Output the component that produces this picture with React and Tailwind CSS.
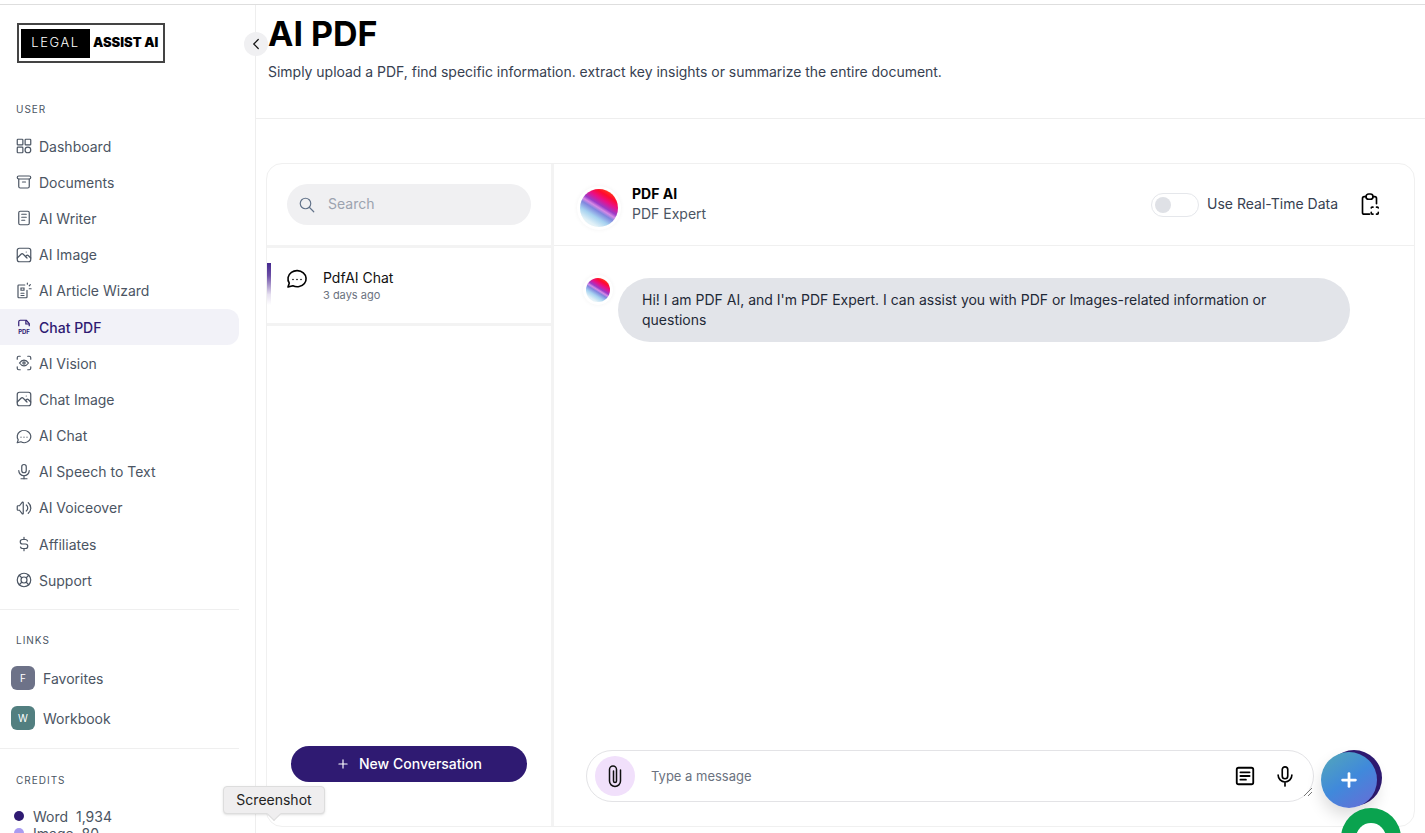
import React from 'react'
import {
  TbArchive,
  TbChevronLeft,
  TbCurrencyDollar,
  TbLifebuoy,
  TbMicrophone,
  TbNotes,
  TbPhoto,
  TbPlus,
  TbSearch,
  TbVolume,
} from 'react-icons/tb'

const DashIcon = ({ className }) => (
  <svg viewBox="0 0 24 24" fill="none" stroke="currentColor" strokeWidth="1.6" className={className}>
    <rect x="3" y="3" width="7.5" height="7.5" rx="1" />
    <rect x="13.5" y="3" width="7.5" height="7.5" rx="1" />
    <rect x="3" y="13.5" width="7.5" height="7.5" rx="1" />
    <circle cx="17.2" cy="17.2" r="3.8" />
  </svg>
)

const WizardIcon = ({ className }) => (
  <svg viewBox="0 0 24 24" fill="none" stroke="currentColor" strokeWidth="1.6" strokeLinecap="round" className={className}>
    <path d="M16 11v9a1 1 0 0 1-1 1H5a1 1 0 0 1-1-1V5a1 1 0 0 1 1-1h8" />
    <path d="M8 8h4v3H8z" />
    <path d="M8 15h4M8 18h4M19 5l1.5-1.5M19 9h2.5M16.5 3V1.5" />
  </svg>
)

const PdfIcon = ({ className }) => (
  <svg viewBox="0 0 24 24" fill="none" className={className}>
    <path d="M5 11V5a2 2 0 0 1 2-2h8l4 4.5V11" stroke="currentColor" strokeWidth="1.6" strokeLinejoin="round" />
    <path d="M14.5 3v5H19" stroke="currentColor" strokeWidth="1.6" />
    <text x="12" y="21" textAnchor="middle" fontSize="8" fontWeight="700" fill="currentColor" fontFamily="Inter, sans-serif">PDF</text>
  </svg>
)

const VisionIcon = ({ className }) => (
  <svg viewBox="0 0 24 24" fill="none" stroke="currentColor" strokeWidth="1.6" strokeLinecap="round" className={className}>
    <path d="M3 7V5a2 2 0 0 1 2-2h2M17 3h2a2 2 0 0 1 2 2v2M21 17v2a2 2 0 0 1-2 2h-2M7 21H5a2 2 0 0 1-2-2v-2" />
    <path d="M6 12c3.5-5 8.500-5 12 0-3.500 5-8.500 5-12 0z" />
    <circle cx="12" cy="12" r="1.500" />
  </svg>
)

const ChatDotsIcon = ({ className }) => (
  <svg viewBox="0 0 24 24" fill="none" stroke="currentColor" strokeWidth="1.6" strokeLinecap="round" strokeLinejoin="round" className={className}>
    <path d="M3 21l1.300-3.900C1.900 13.600 2.800 9 6.400 6.400c3.500-2.500 8.600-2.300 11.900.5 3.300 2.800 3.700 7.400 1.100 10.600-2.600 3.200-7.500 4.200-11.500 2.200L3 21z" />
    <path d="M8 13.500h.01M12 13.500h.01M16 13.500h.01" />
  </svg>
)

const ClipboardIcon = ({ className }) => (
  <svg viewBox="0 0 24 28" fill="none" stroke="currentColor" strokeWidth="1.900" strokeLinecap="round" className={className}>
    <path d="M8 5H6a2 2 0 0 0-2 2v16a2 2 0 0 0 2 2h6" />
    <path d="M16 5h2a2 2 0 0 1 2 2v6" />
    <rect x="8" y="2" width="8" height="6" rx="3" />
    <path d="M16 17h-1a1 1 0 0 0-1 1M20 17h1a1 1 0 0 1 1 1M14 23v1a1 1 0 0 0 1 1h1M22 23v1a1 1 0 0 1-1 1h-1" />
  </svg>
)

const ClipIcon = ({ className }) => (
  <svg viewBox="0 0 24 24" fill="none" stroke="currentColor" strokeWidth="1.500" strokeLinecap="round" className={className}>
    <path d="M10.500 7v10a1.500 1.500 0 0 0 3 0V5.500a3.500 3.500 0 0 0-7 0V17a5.500 5.500 0 0 0 11 0V6" />
  </svg>
)

const NoteBoxIcon = ({ className }) => (
  <svg viewBox="0 0 24 24" fill="none" stroke="currentColor" strokeWidth="2" strokeLinecap="round" className={className}>
    <rect x="3" y="3" width="18" height="18" rx="2" />
    <path d="M7 8h10M7 12h10M7 16h6" />
  </svg>
)

const MicIcon = ({ className }) => (
  <svg viewBox="0 0 24 24" fill="none" stroke="currentColor" strokeWidth="1.800" strokeLinecap="round" className={className}>
    <rect x="9" y="2" width="6" height="13" rx="3" />
    <path d="M4.500 11a7.500 7.500 0 0 0 15 0M12 18.500V23" />
  </svg>
)

const userLinks = [
  { label: 'Dashboard', icon: DashIcon },
  { label: 'Documents', icon: TbArchive },
  { label: 'AI Writer', icon: TbNotes },
  { label: 'AI Image', icon: TbPhoto },
  { label: 'AI Article Wizard', icon: WizardIcon },
  { label: 'Chat PDF', icon: PdfIcon, active: true },
  { label: 'AI Vision', icon: VisionIcon },
  { label: 'Chat Image', icon: TbPhoto },
  { label: 'AI Chat', icon: ChatDotsIcon },
  { label: 'AI Speech to Text', icon: TbMicrophone },
  { label: 'AI Voiceover', icon: TbVolume },
  { label: 'Affiliates', icon: TbCurrencyDollar },
  { label: 'Support', icon: TbLifebuoy },
]

const Avatar = ({ size }) => (
  <div className={`${size} rounded-full shrink-0 bg-[linear-gradient(212deg,#ff7a00_0%,#ff0a30_22%,#e8108a_33%,#9a3cc8_44%,#d68ae6_50%,#7f86de_56%,#a6d2f0_68%,#e2f1f7_82%,#f0f7f9_100%)] shadow-[0_0_0_3px_#fff,0_0_4px_3px_#f3f3f3]`}></div>
)

const Sidebar = () => {
  return (
    <aside className="w-[256px] shrink-0 border-r border-[#eeeeee] flex flex-col">
      <div className="pl-[17px] pt-[18px]">
        <div className="w-[148px] h-[40px] border-2 border-[#444444] flex items-center pl-[2px]">
          <div className="w-[69px] h-[29px] bg-black text-white text-[13px] tracking-[1.6px] font-light flex items-center justify-center">LEGAL</div>
          <div className="ml-[3px] text-[13px] font-black text-black whitespace-nowrap">ASSIST AI</div>
        </div>
      </div>

      <div className="mt-[40px] pl-4 text-[10px] leading-3 tracking-[1px] text-[#4b5563]">USER</div>
      <nav className="mt-[13px] w-[239px] flex flex-col">
        {userLinks.map((item) => (
          <div
            key={item.label}
            className={`h-[36.2px] flex items-center gap-[6px] pl-[15px] rounded-r-xl text-[14px] ${item.active ? 'bg-[#f2f2f8] text-[#2f1a72] font-medium' : 'text-[#4b5563]'}`}
          >
            <item.icon className="w-[18px] h-[18px] shrink-0" strokeWidth={1.6} />
            <span>{item.label}</span>
          </div>
        ))}
      </nav>
      <div className="mt-[11px] w-[239px] border-t border-[#efefef]"></div>

      <div className="mt-[24px] pl-4 text-[10px] leading-3 tracking-[1px] text-[#4b5563]">LINKS</div>
      <div className="mt-[20px] pl-[11px] flex flex-col gap-[16px]">
        <div className="flex items-center gap-[8px] text-[14px] text-[#4b5563]">
          <span className="w-6 h-6 rounded-md bg-[#6d7288] text-white text-[10px] flex items-center justify-center">F</span>
          Favorites
        </div>
        <div className="flex items-center gap-[8px] text-[14px] text-[#4b5563]">
          <span className="w-6 h-6 rounded-md bg-[#527f80] text-white text-[10px] flex items-center justify-center">W</span>
          Workbook
        </div>
      </div>
      <div className="mt-[18px] w-[239px] border-t border-[#efefef]"></div>

      <div className="mt-[25px] pl-4 text-[10px] leading-3 tracking-[1px] text-[#4b5563]">CREDITS</div>
      <div className="mt-[22px] pl-[14px] flex flex-col gap-[1px] text-[14px] text-[#4b5563]">
        <div className="flex items-center gap-[9px] h-[16px]">
          <span className="w-[10px] h-[10px] rounded-full bg-[#2f1a72]"></span>
          <span>Word&nbsp; 1,934</span>
        </div>
        <div className="flex items-center gap-[9px] h-[16px]">
          <span className="w-[10px] h-[10px] rounded-full bg-[#a99bf0]"></span>
          <span>Image&nbsp; 80</span>
        </div>
      </div>
    </aside>
  )
}

const ChatList = () => {
  return (
    <div className="w-[284px] shrink-0 border-r-[3px] border-[#f3f3f3] box-content flex flex-col">
      <div className="h-[61px] shrink-0 pl-5 pt-5 pr-5 border-b-[3px] border-[#f3f3f3] box-content">
        <div className="h-[41px] w-[244px] bg-[#f0f0f2] rounded-full flex items-center pl-[11px] gap-[12px]">
          <TbSearch className="w-[18px] h-[18px] text-[#64748b]" strokeWidth={1.6} />
          <span className="text-[14px] text-[#9ca3af] mb-[2px]">Search</span>
        </div>
      </div>
      <div className="h-[75px] shrink-0 border-b-[3px] border-[#f3f3f3] box-content flex">
        <div className="w-[4px] h-[42px] mt-[15px] bg-[linear-gradient(180deg,#44288e_0%,#6c4ea6_30%,#e6e0f0_75%,#ffffff_100%)]"></div>
        <ChatDotsIcon className="w-6 h-6 ml-[14px] mt-[18px] text-black" />
        <div className="ml-[14px] mt-[20px]">
          <div className="text-[14px] leading-5 text-[#111111]">PdfAI Chat</div>
          <div className="text-[11px] leading-[14px] text-[#6b7280]">3 days ago</div>
        </div>
      </div>
      <div className="flex-1 flex flex-col justify-end items-center pb-[44px]">
        <button className="w-[236px] h-[36px] pb-[1px] bg-[#2f1a72] rounded-full text-white text-[14px] font-medium flex items-center justify-center gap-[9px]">
          <TbPlus className="w-[14px] h-[14px]" />
          New Conversation
        </button>
      </div>
    </div>
  )
}

const ChatPanel = () => {
  return (
    <div className="flex-1 flex flex-col min-w-0">
      <div className="h-[82px] shrink-0 border-b border-[#f0f0f0] flex items-center pl-[26px] pr-[34px]">
        <div className="mt-[6px]"><Avatar size="w-[38px] h-[38px]" /></div>
        <div className="ml-[14px] mb-[1px]">
          <div className="text-[14px] leading-5 font-bold text-black">PDF AI</div>
          <div className="text-[14px] leading-5 text-[#4b5563]">PDF Expert</div>
        </div>
        <div className="ml-auto flex items-center">
          <div className="w-[48px] h-[24px] rounded-full border border-[#e5e7eb] flex items-center pl-[3px]">
            <div className="w-4 h-4 rounded-full bg-[#dfe1e6]"></div>
          </div>
          <span className="ml-2 text-[14px] text-[#374151] mb-[2px]">Use Real-Time Data</span>
          <ClipboardIcon className="ml-[21px] w-[21px] h-[25px] text-black" />
        </div>
      </div>

      <div className="flex-1 flex items-start pl-8 pt-[32px]">
        <Avatar size="w-6 h-6" />
        <div className="ml-2 w-[732px] h-[64px] bg-[#e2e4e9] rounded-[32px] pl-6 pr-[60px] py-3 text-[14px] leading-5 text-[#1f2937]">
          Hi! I am PDF AI, and I'm PDF Expert. I can assist you with PDF or Images-related information or questions
        </div>
      </div>

      <div className="shrink-0 pl-8 pb-[24px]">
        <div className="relative w-[728px] h-[52px] rounded-[26px] border border-[#e3e3e6] flex items-center pl-2 pr-[17px]">
          <div className="w-10 h-10 rounded-full bg-[#f1e0fb] flex items-center justify-center">
            <ClipIcon className="w-6 h-6 text-[#111111]" />
          </div>
          <span className="ml-4 mt-[2px] text-[13px] text-[#6b7280]">Type a message</span>
          <NoteBoxIcon className="ml-auto w-[22px] h-[22px] text-black" />
          <MicIcon className="ml-[18px] w-[22px] h-[22px] text-black" />
          <svg viewBox="0 0 8 8" className="absolute right-[1px] bottom-[5px] w-2 h-2 text-[#777777]" stroke="currentColor" fill="none">
            <path d="M0 8L8 0M4 8l4-4" />
          </svg>
        </div>
      </div>
    </div>
  )
}

export default function App() {
  return (
    <div className="relative h-[833px] w-[1425px] overflow-hidden bg-white font-['Inter',sans-serif] pt-[4px]">
      <div className="h-full border-t border-[#dedede] flex">
        <Sidebar />

        <main className="flex-1 flex flex-col min-w-0">
          <header className="h-[114px] shrink-0 border-b border-[#eeeeee] pl-3 pt-[9px]">
            <h1 className="text-[34px] leading-10 font-bold text-black">AI PDF</h1>
            <p className="mt-[8px] text-[14px] leading-5 tracking-[-0.02px] text-[#374151]">
              Simply upload a PDF, find specific information. extract key insights or summarize the entire document.
            </p>
          </header>

          <div className="h-[664px] shrink-0 mt-[44px] ml-[10px] w-[1149px] border border-[#f0f0f0] rounded-2xl flex overflow-hidden">
            <ChatList />
            <ChatPanel />
          </div>
        </main>
      </div>

      {/* collapse button */}
      <button className="absolute left-[244px] top-[32px] w-6 h-6 rounded-full bg-[#f0f0f2] flex items-center justify-center">
        <TbChevronLeft className="w-[18px] h-[18px] text-[#111111]" strokeWidth={1.6} />
      </button>

      {/* screenshot tooltip */}
      <div className="absolute left-[223px] top-[786px] w-[102px] h-[28px] pb-[2px] rounded bg-[#efeeef] border border-[#dddddd] shadow-sm text-[14px] text-[#222222] flex items-center justify-center">
        Screenshot
        <span className="absolute left-[45px] top-[22px] w-[10px] h-[10px] rotate-45 bg-[#efeeef] border-r border-b border-[#dddddd]"></span>
      </div>

      {/* floating buttons */}
      <div className="absolute left-[1326px] top-[750px] w-[56px] h-[56px] rounded-full bg-[#2f1a72]"></div>
      <button className="absolute left-[1321px] top-[752px] w-[56px] h-[56px] rounded-full bg-[linear-gradient(145deg,#54a8b8_0%,#4089db_50%,#6a6bd6_100%)] shadow-[0_8px_16px_rgba(0,0,0,0.14)] flex items-center justify-center">
        <TbPlus className="w-[22px] h-[22px] text-white" strokeWidth={3} />
      </button>
      <div className="absolute left-[1341px] top-[808px] w-[60px] h-[60px] rounded-full bg-[#0aa34f] flex items-center justify-center">
        <div className="w-[30px] h-[30px] rounded-full bg-white"></div>
      </div>
    </div>
  )
}
